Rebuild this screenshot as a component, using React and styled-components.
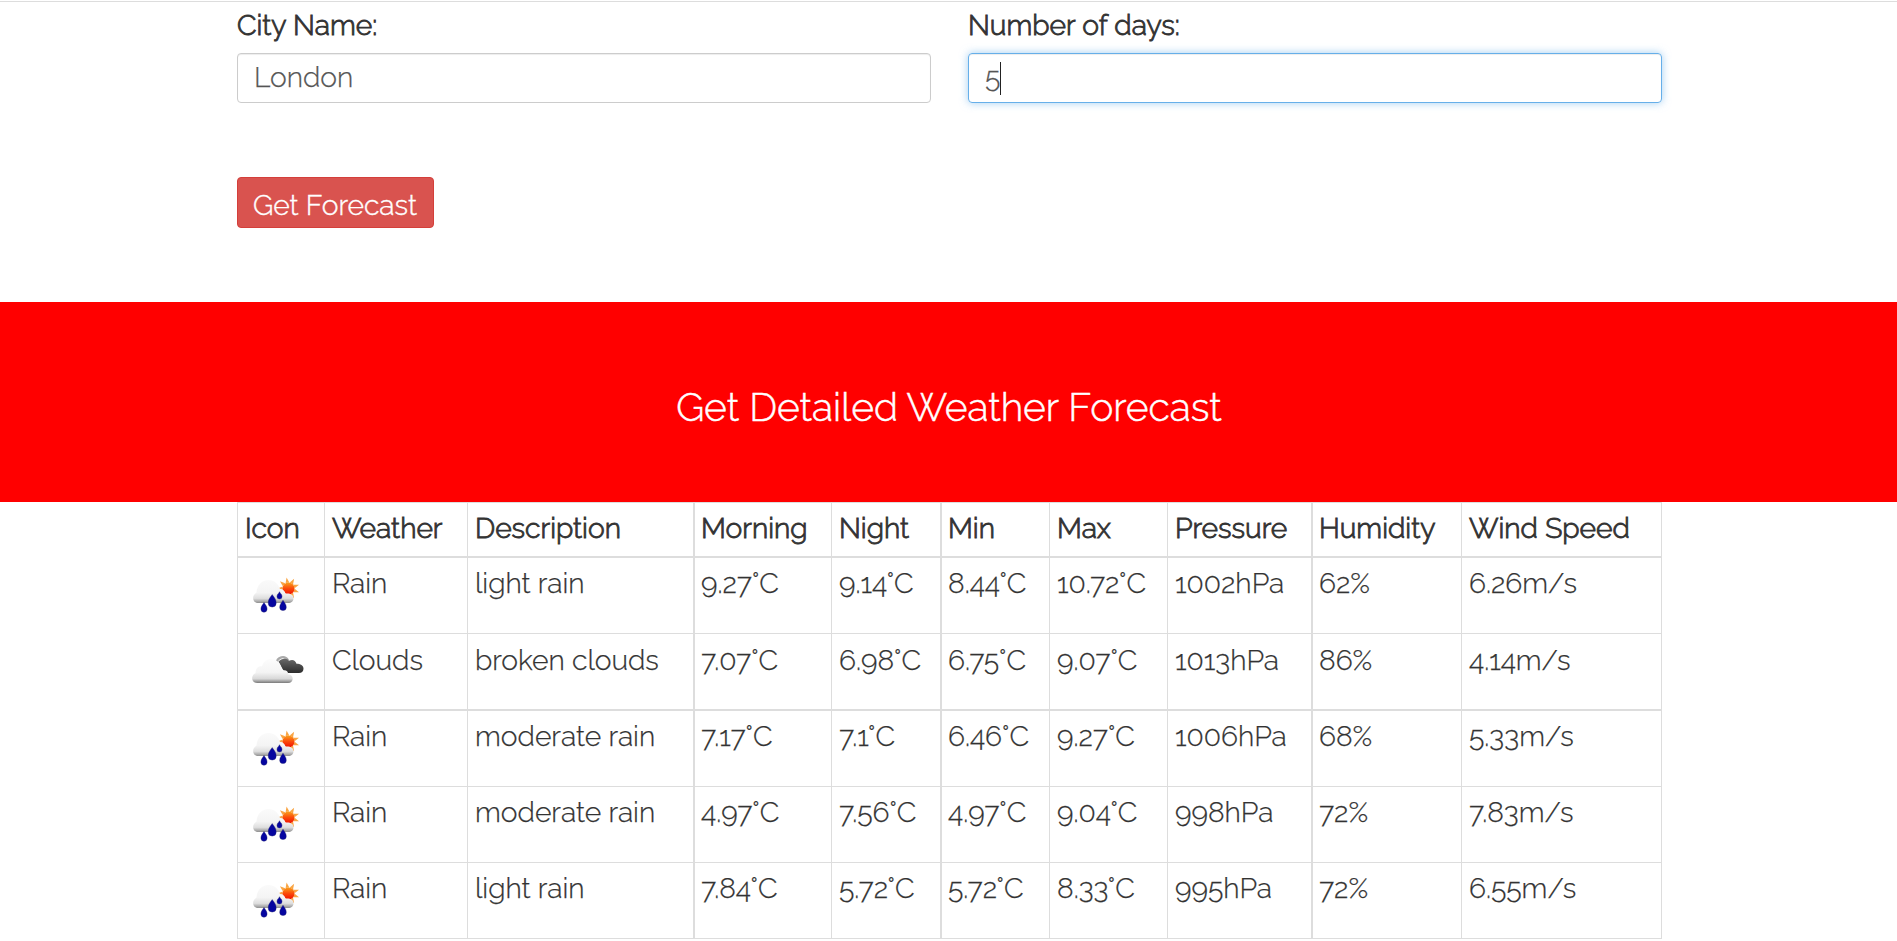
import React from "react";
import styled, { createGlobalStyle } from "styled-components";

const GlobalStyle = createGlobalStyle`
  *, *::before, *::after { box-sizing: border-box; }
  body {
    margin: 0;
    background: #fff;
    color: #333;
    font: 300 28.24px/40px Raleway, Lato, "Open Sans", sans-serif;
    overflow: hidden;
  }
`;

const Page = styled.main`
  display: flex;
  flex-direction: column;
  height: 941px;
  overflow: hidden;
`;

const TopRule = styled.hr`
  width: 100%;
  height: 1px;
  margin: 1px 0 0;
  border: 0;
  background: #ddd;
`;

const Container = styled.div`
  width: 1425px;
  margin-left: 237px;
`;

const Form = styled.form`
  height: 300px;
  padding-top: 3px;
`;

const Fields = styled.div`
  display: grid;
  grid-template-columns: 694px 694px;
  column-gap: 37px;
`;

const Label = styled.label`
  display: block;
  margin-bottom: 8px;
  -webkit-text-stroke: 0.9px #333;
`;

const Control = styled.div`
  display: flex;
  align-items: center;
  height: 50px;
  padding: 0 15px 3px 16px;
  border: 1px solid ${(p) => (p.$focused ? "#66afe9" : "#ccc")};
  border-radius: 4px;
  color: #555;
  -webkit-text-stroke: 0.25px #555;
  box-shadow: ${(p) =>
    p.$focused
      ? "inset 0 1px 1px rgba(0,0,0,.075), 0 0 8px rgba(102,175,233,.6)"
      : "inset 0 1px 1px rgba(0,0,0,.075)"};
`;

const Caret = styled.i`
  width: 1px;
  height: 33px;
  margin-top: 3px;
  background: #222;
`;

const SubmitButton = styled.button`
  display: block;
  width: 197px;
  height: 51px;
  margin-top: 74px;
  padding: 4px 0 0 15px;
  border: 1px solid #d43f3a;
  border-radius: 4px;
  background: #d9534f;
  color: #fff;
  font: inherit;
  text-align: left;
  -webkit-text-stroke: 0.4px #fff;
`;

const Banner = styled.section`
  display: flex;
  align-items: center;
  justify-content: center;
  flex: none;
  height: 200px;
  padding: 9px 0 0 1px;
  background: #f00;
  color: #fff;
  font-size: 39px;
  -webkit-text-stroke: 0.5px #fff;
`;

const Table = styled.table`
  width: 1425px;
  table-layout: fixed;
  border-spacing: 0;
  border-right: 1px solid #ddd;
  border-bottom: 1px solid #ddd;
`;

const Row = styled.tr`
  height: ${(p) => p.$h}px;

  > * {
    padding: ${(p) => p.$pad || 5}px 0 0 7px;
    border: 0 solid #ddd;
    border-top-width: ${(p) => (p.$thick ? 2 : 1)}px;
    border-left-width: 1px;
    vertical-align: top;
    text-align: left;
    white-space: nowrap;
    -webkit-text-stroke: 0.25px #333;
  }

  > :nth-child(4),
  > :nth-child(6),
  > :nth-child(9) {
    border-left-width: 2px;
    padding-left: 6px;
  }
`;

const Heading = styled.th`
  && {
    font-weight: 300;
    -webkit-text-stroke: 0.9px #333;
  }
`;

const Cell = styled.td``;

const WeatherIcon = styled.svg`
  display: block;
  width: 60px;
  height: 52px;
  margin-top: 3px;
`;

const drop = (x, top, bottom, r) =>
  `M${x} ${top}C${x + r * 0.4} ${top + 2.4} ${x + r} ${bottom - r * 2} ${x + r} ${bottom - r}A${r} ${r} 0 0 1 ${x - r} ${bottom - r}C${x - r} ${bottom - r * 2} ${x - r * 0.4} ${top + 2.4} ${x} ${top}Z`;

function RainIcon({ id }) {
  const rays = Array.from({ length: 9 }, (_, i) => i * 40 - 100);
  return (
    <WeatherIcon viewBox="0 0 60 52" aria-label="Rain">
      <defs>
        <linearGradient id={`c${id}`} x1="0" y1="0" x2="0" y2="1">
          <stop offset="0" stopColor="#fafafa" />
          <stop offset=".55" stopColor="#f4f4f4" />
          <stop offset=".8" stopColor="#dedede" />
          <stop offset="1" stopColor="#909090" />
        </linearGradient>
        <linearGradient id={`s${id}`} x1="0" y1="0" x2="0" y2="1">
          <stop offset="0" stopColor="#f9a01c" />
          <stop offset=".5" stopColor="#fb4a0a" />
          <stop offset="1" stopColor="#f01000" />
        </linearGradient>
      </defs>
      <g fill="#f9a544">
        {rays.map((a) => (
          <path key={a} d="M5.800 -1.900L11.200 0L5.800 1.900Z" transform={`translate(43.500 22.500) rotate(${a})`} />
        ))}
      </g>
      <circle cx="43.500" cy="22.500" r="6" fill={`url(#s${id})`} />
      <path
        d="M13.500 37C7 37 6.500 29.500 11.500 26.500C12 19 17 14 23.500 14C29.500 14 33.500 18 35 23C37 22.500 39.500 24 40.500 27.500C45 27 48.500 28.500 48.500 32C48.500 35.500 46.500 37 43 37Z"
        fill={`url(#c${id})`}
      />
      <g fill="#0505a0" stroke="#23236e" strokeWidth=".4">
        <path d={drop(19, 36.5, 46.2, 3.1)} />
        <path d={drop(27.2, 28.6, 41.1, 4)} />
        <path d={drop(34.5, 25.7, 33, 2.5)} />
        <path d={drop(38, 34.2, 44.6, 3.3)} />
      </g>
    </WeatherIcon>
  );
}

function CloudsIcon({ id }) {
  return (
    <WeatherIcon viewBox="0 -2.300 60 52" aria-label="Clouds">
      <defs>
        <linearGradient id={`f${id}`} x1="0" y1="0" x2="0" y2="1">
          <stop offset="0" stopColor="#fcfcfc" />
          <stop offset=".55" stopColor="#f4f4f4" />
          <stop offset=".82" stopColor="#d8d8d8" />
          <stop offset="1" stopColor="#777" />
        </linearGradient>
        <linearGradient id={`b${id}`} x1="0" y1="0" x2="0" y2="1">
          <stop offset="0" stopColor="#6a6a6a" />
          <stop offset=".5" stopColor="#4a4a4a" />
          <stop offset="1" stopColor="#2c2c2c" />
        </linearGradient>
      </defs>
      <path d="M31.500 18.500C32 11 40 10 43 15" fill="none" stroke="#aaa" strokeWidth="2.400" />
      <path
        d="M33.500 16.500C36 12.500 42.500 12.500 44 15.500C47.500 13.500 50.500 15 51.500 18.500C55.500 18.500 58.500 20 58.500 23.500C58.500 26.200 56.500 27.800 54 27.800H42C39 27.800 36 20.500 33.500 16.500Z"
        fill={`url(#b${id})`}
      />
      <path
        d="M12.500 37.800C6 37.500 5.500 30 10.500 28C10.500 22 14.500 20.500 17 21C19 15 24.500 12.500 29.500 14.500C34.500 16 36.500 20.500 37 25.500C41 24 43.500 26.500 43 29C49.500 29.500 49 37.500 43 37.800Z"
        fill={`url(#f${id})`}
      />
    </WeatherIcon>
  );
}

const columns = [
  { width: 87, title: "Icon" },
  { width: 143, title: "Weather" },
  { width: 226, title: "Description" },
  { width: 138, title: "Morning" },
  { width: 109, title: "Night" },
  { width: 109, title: "Min" },
  { width: 118, title: "Max" },
  { width: 144, title: "Pressure" },
  { width: 150, title: "Humidity" },
  { width: 200, title: "Wind Speed" },
];

const days = [
  { height: 77, thick: true, values: ["Rain", "light rain", "9.27°C", "9.14°C", "8.44°C", "10.72°C", "1002hPa", "62%", "6.26m/s"] },
  { height: 76, pad: 6, values: ["Clouds", "broken clouds", "7.07°C", "6.98°C", "6.75°C", "9.07°C", "1013hPa", "86%", "4.14m/s"] },
  { height: 77, thick: true, values: ["Rain", "moderate rain", "7.17°C", "7.1°C", "6.46°C", "9.27°C", "1006hPa", "68%", "5.33m/s"] },
  { height: 76, values: ["Rain", "moderate rain", "4.97°C", "7.56°C", "4.97°C", "9.04°C", "998hPa", "72%", "7.83m/s"] },
  { height: 76, values: ["Rain", "light rain", "7.84°C", "5.72°C", "5.72°C", "8.33°C", "995hPa", "72%", "6.55m/s"] },
];

function DayRow({ day, id }) {
  const Icon = day.values[0] === "Rain" ? RainIcon : CloudsIcon;
  return (
    <Row $h={day.height} $thick={day.thick} $pad={day.pad}>
      <Cell><Icon id={id} /></Cell>
      {day.values.map((value, i) => <Cell key={i}>{value}</Cell>)}
    </Row>
  );
}

export default function App() {
  return (
    <>
      <GlobalStyle />
      <Page>
        <TopRule />
        <Container>
          <Form>
            <Fields>
              <div>
                <Label>City Name:</Label>
                <Control>London</Control>
              </div>
              <div>
                <Label>Number of days:</Label>
                <Control $focused>
                  <span>5</span>
                  <Caret />
                </Control>
              </div>
            </Fields>
            <SubmitButton type="button">Get Forecast</SubmitButton>
          </Form>
        </Container>
        <Banner>Get Detailed Weather Forecast</Banner>
        <Container>
          <Table>
            <colgroup>
              {columns.map((c) => <col key={c.title} width={c.width} />)}
            </colgroup>
            <thead>
              <Row $h={54}>
                {columns.map((c) => <Heading key={c.title}>{c.title}</Heading>)}
              </Row>
            </thead>
            <tbody>
              {days.map((day, i) => <DayRow key={i} day={day} id={i} />)}
            </tbody>
          </Table>
        </Container>
      </Page>
    </>
  );
}
